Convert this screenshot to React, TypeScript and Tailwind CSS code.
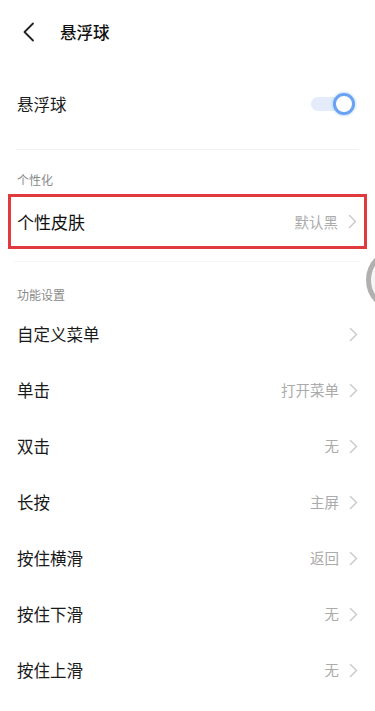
import React from "react";

const font = { fontFamily: '"Noto Sans CJK SC", "Noto Sans", sans-serif' };

function Chevron() {
  return (
    <svg width="9" height="15" viewBox="0 0 9 15" fill="none" className="ml-[10px]">
      <path d="M1.5 1.5L7.5 7.5L1.5 13.5" stroke="#c6c6c6" strokeWidth="1.3" strokeLinecap="round" strokeLinejoin="round" />
    </svg>
  );
}

function Row({ label, value }: { label: string; value?: string }) {
  return (
    <div className="flex items-center justify-between h-[56px] pl-[17px] pr-[17px]">
      <span className="text-[16.5px] text-[#1a1a1a]">{label}</span>
      <div className="flex items-center">
        {value && <span className="text-[14.5px] text-[#ababab]">{value}</span>}
        <Chevron />
      </div>
    </div>
  );
}

function SectionTitle({ children, className }: { children: React.ReactNode; className?: string }) {
  return (
    <div className={"h-[20px] flex items-center px-[17px] text-[12px] text-[#8a8a8a] " + (className ?? "")}>
      {children}
    </div>
  );
}

export default function App() {
  const rows = [
    { label: "自定义菜单" },
    { label: "单击", value: "打开菜单" },
    { label: "双击", value: "无" },
    { label: "长按", value: "主屏" },
    { label: "按住横滑", value: "返回" },
    { label: "按住下滑", value: "无" },
    { label: "按住上滑", value: "无" },
  ];

  return (
    <div className="relative w-[375px] h-[711px] bg-white overflow-hidden" style={font}>
      {/* header */}
      <header className="flex items-center h-16 pl-[22px]">
        <svg width="14" height="20" viewBox="0 0 14 20" fill="none">
          <path d="M11 1.5L2.5 10L11 18.5" stroke="#222" strokeWidth="1.8" strokeLinecap="round" strokeLinejoin="round" />
        </svg>
        <span className="ml-[24px] text-[16.5px] font-medium text-[#111]">悬浮球</span>
      </header>

      {/* toggle row */}
      <div className="mt-[12px] flex items-center justify-between h-[56px] pl-[17px] pr-[20px]">
        <span className="text-[16.5px] text-[#1a1a1a]">悬浮球</span>
        <div className="relative w-[44px] h-[22px] flex items-center">
          <div className="w-[36px] h-[14px] rounded-full bg-[#e4ecfb]" />
          <div className="absolute right-0 top-0 w-[22px] h-[22px] rounded-full bg-white border-[3px] border-[#6aa3f2] shadow-[0_0_3px_rgba(90,150,240,0.6)]" />
        </div>
      </div>
      <div className="mt-[17px] mx-[16px] h-px bg-[#f2f2f2]" />

      <SectionTitle className="mt-[20px]">个性化</SectionTitle>
      <div className="mt-[4px] ml-[8px] w-[359px] h-[55px] border-[3px] border-[#e0393e] flex items-center justify-between pl-[6px] pr-[7px]">
        <span className="text-[17px] text-[#111]">个性皮肤</span>
        <div className="flex items-center">
          <span className="text-[14.5px] text-[#ababab]">默认黑</span>
          <Chevron />
        </div>
      </div>
      <div className="mt-[12px] mx-[14px] h-px bg-[#f5f5f5]" />

      <SectionTitle className="mt-[23px]">功能设置</SectionTitle>
      <div className="mt-[1px]">
        {rows.map((r) => (
          <Row key={r.label} label={r.label} value={r.value} />
        ))}
      </div>

      {/* floating ball overlay at edge */}
      <div className="absolute left-[366px] top-[248px] w-[64px] h-[64px] rounded-full border-[5px] border-[#b0b0b0] bg-[#eeeeee]/60" />
    </div>
  );
}
